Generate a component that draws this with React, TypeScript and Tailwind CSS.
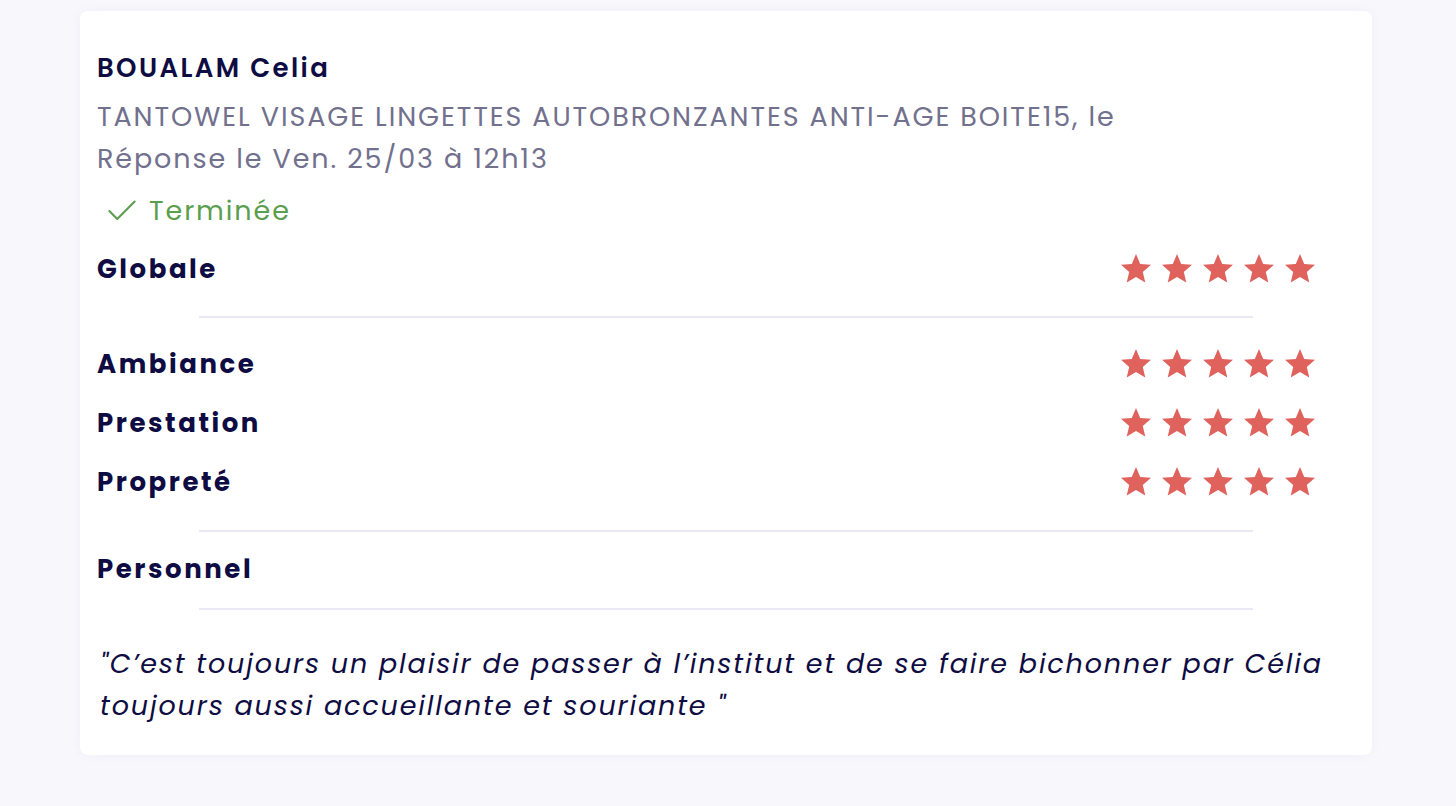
import React from 'react';

const font = { fontFamily: 'Poppins, Inter, "Open Sans", sans-serif' };

const Star = () => (
  <svg width="36" height="36" viewBox="0 0 24 24" fill="#e0625c">
    <path d="M12 17.27 18.18 21l-1.64-7.03L22 9.24l-7.19-.61L12 2 9.19 8.63 2 9.24l5.46 4.73L5.82 21z" />
  </svg>
);

const Stars = () => (
  <div className="flex gap-[5px]">
    {[0, 1, 2, 3, 4].map((i) => (
      <Star key={i} />
    ))}
  </div>
);

const Row = ({ label, stars = true }: { label: string; stars?: boolean }) => (
  <div className="flex h-[40px] items-center justify-between pr-[37px]">
    <span className="text-[26px] font-bold tracking-[2.55px] text-[#0e0c42]">{label}</span>
    {stars && <Stars />}
  </div>
);

const Divider = ({ className = '' }: { className?: string }) => (
  <div className={`mx-[102px] h-[2px] bg-[#e9e9f5] ${className}`} />
);

const App = () => {
  return (
    <div className="min-h-screen bg-[#f7f7fc] pt-[11px] pl-[80px]" style={font}>
      <div className="w-[1292px] rounded-lg bg-white px-[17px] pt-[39px] pb-[28px] shadow-[0_0_12px_rgba(40,40,120,0.04)]">
        <h2 className="text-[26px] leading-[36px] font-semibold tracking-[2.4px] text-[#0e0c42]">
          BOUALAM Celia
        </h2>
        <p className="mt-[10px] text-[27px] leading-[42px] tracking-[1.9px] text-[#71708d]">
          TANTOWEL VISAGE LINGETTES AUTOBRONZANTES ANTI-AGE BOITE15, le
          <br />
          Réponse le Ven. 25/03 à 12h13
        </p>
        <div className="mt-[13px] flex h-[36px] items-center text-[27px] tracking-[1.9px] text-[#5a9e4e]">
          <svg
            className="ml-[6px]"
            width="38"
            height="38"
            viewBox="0 0 24 24"
            fill="none"
            stroke="#5a9e4e"
            strokeWidth="1.3"
            strokeLinecap="round"
            strokeLinejoin="round"
          >
            <path d="M20 6 9 17l-5-5" />
          </svg>
          <span className="ml-[8px]">Terminée</span>
        </div>

        <div className="mt-[20px]">
          <Row label="Globale" />
        </div>
        <Divider className="mt-[27px]" />

        <div className="mt-[26px] flex flex-col gap-[19px]">
          <Row label="Ambiance" />
          <Row label="Prestation" />
          <Row label="Propreté" />
        </div>
        <Divider className="mt-[28px]" />

        <div className="mt-[17px]">
          <Row label="Personnel" stars={false} />
        </div>
        <Divider className="mt-[19px]" />

        <p className="mt-[33px] pl-[3px] text-[27px] leading-[42px] italic tracking-[1.85px] text-[#0e0c42]">
          "C’est toujours un plaisir de passer à l’institut et de se faire bichonner par Célia
          <br />
          toujours aussi accueillante et souriante "
        </p>
      </div>
    </div>
  );
};

export default App;
